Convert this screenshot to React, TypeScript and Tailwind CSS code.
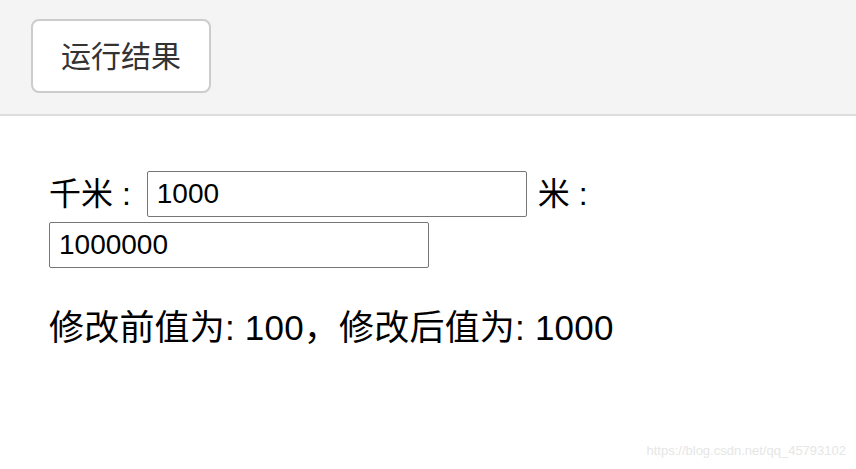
import React, { useState } from 'react';

const App = () => {
  const [km, setKm] = useState('1000');
  const m = km === '' ? '' : String(Number(km) * 1000);

  return (
    <div
      className="w-[856px] h-[469px] bg-white relative overflow-hidden text-black"
      style={{ fontFamily: '"Liberation Sans", "Noto Sans CJK SC", sans-serif' }}
    >
      {/* toolbar */}
      <div className="h-[116px] bg-[#f4f4f4] border-b-2 border-[#dddddd] pl-[31px] pt-[19px]">
        <button className="w-[180px] h-[74px] bg-white border-2 border-[#cccccc] rounded-[8px] text-[30px] text-[#333333]">
          运行结果
        </button>
      </div>

      {/* result */}
      <div className="pl-[49px] pt-[55px] w-[660px]">
        <div className="flex flex-wrap items-center gap-y-[5px] text-[32px] leading-[36px]">
          <span className="mr-[16px]">千米 :</span>
          <input
            value={km}
            onChange={(e) => setKm(e.target.value)}
            className="w-[380px] h-[46px] border border-[#767676] rounded-[2px] px-[9px] text-[28px] outline-none"
          />
          <span className="ml-[11px]">米 :</span>
          <input
            value={m}
            readOnly
            className="w-[380px] h-[46px] border border-[#767676] rounded-[2px] px-[9px] text-[28px] outline-none"
          />
        </div>
        <p className="mt-[38px] text-[35px] leading-[44px] tracking-[0.2px]">修改前值为: 100，修改后值为: 1000</p>
      </div>

      <span className="absolute right-[10px] bottom-[9px] text-[13px] text-[#e6e6e6]">
        https://blog.csdn.net/qq_45793102
      </span>
    </div>
  );
};

export default App;
